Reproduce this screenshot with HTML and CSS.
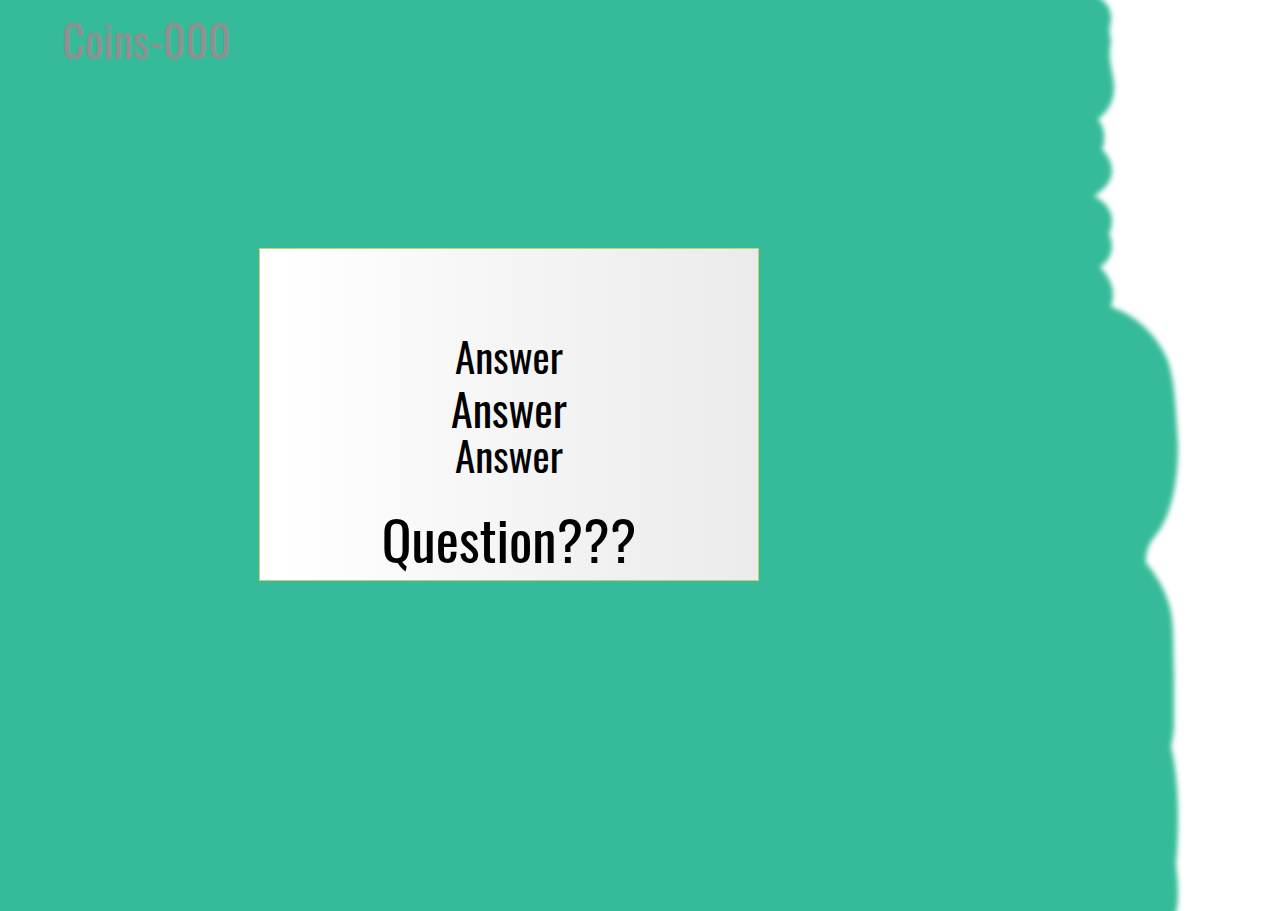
FILE: index.html
```
<!DOCTYPE html>
<html lang="en">
<head>
<meta charset="utf-8">
<meta name="viewport" content="width=device-width, initial-scale=1">
<title>Quiz</title>
<link rel="stylesheet" href="styles.css">
</head>
<body>
<svg class="backdrop" viewBox="0 0 1281 911" preserveAspectRatio="none" aria-hidden="true">
  <defs><filter id="soft" x="-5%" y="-5%" width="110%" height="110%"><feGaussianBlur stdDeviation="2.8"/></filter></defs>
  <path filter="url(#soft)" fill="#36bb99" d="M-30-30H1098V-3C1108 3 1112 11 1111 21Q1108 29 1111 41Q1109 51 1110 60Q1112 72 1114 84C1115 98 1110 110 1098 119C1105 128 1106 139 1102 149C1109 157 1112 164 1112 171C1112 181 1104 190 1094 196C1106 202 1112 211 1112 221Q1112 228 1109 234Q1112 240 1112 248C1111 256 1107 262 1100 267C1108 275 1113 285 1113 294Q1113 301 1111 307C1137 315 1158 337 1168 361C1175 382 1176 412 1178 445C1178 475 1174 503 1163 524C1157 535 1150 541 1148 548Q1145 555 1146 563C1158 577 1167 593 1171 612C1174 628 1173 650 1174 675V728Q1173 738 1171 747C1175 762 1178 787 1178 816Q1178 842 1176 863Q1178 880 1178 895Q1178 910 1173 922V945H-30Z"/>
</svg>
<header class="status"><output class="coins">Coins-000</output></header>
<main class="stage">
  <section class="card" aria-labelledby="question">
    <div class="answers">
      <button class="answer" type="button">Answer</button>
      <button class="answer answer-large" type="button">Answer</button>
      <button class="answer" type="button">Answer</button>
    </div>
    <h1 class="question" id="question">Question???</h1>
  </section>
</main>
</body>
</html>
```
FILE: styles.css
```
* { box-sizing: border-box; }

body {
  margin: 0;
  min-height: 100vh;
  background: #fff;
  color: #000;
  font-family: Oswald, "Roboto Condensed", "Liberation Sans Narrow", "DejaVu Sans Condensed", sans-serif;
}

.backdrop {
  position: absolute;
  inset: 0;
  z-index: -1;
  width: 100%;
  height: 100%;
}

.status {
  padding: 14px 62px 0;
  color: #909090;
  font-size: 44px;
  line-height: 52px;
}

.coins { display: block; }

.stage { padding: 182px 20px 40px 259px; }

.card {
  display: flex;
  flex-direction: column;
  align-items: center;
  max-width: 500px;
  padding: 82px 16px 8px;
  border: 1px solid #c9cf6c;
  background: linear-gradient(90deg, #fff 5%, #f5f5f5 50%, #ebebeb);
}

.answers {
  display: flex;
  flex-direction: column;
  align-items: center;
}

.answer {
  padding: 0;
  border: 0;
  background: none;
  color: inherit;
  font-family: inherit;
  font-size: 41px;
  line-height: 50px;
  cursor: pointer;
}

.answer-large {
  margin: 3px 0 -4px;
  font-size: 44px;
}

.question {
  margin: 24px 0 0;
  font-size: 55px;
  font-weight: 400;
  line-height: 68px;
}
```
